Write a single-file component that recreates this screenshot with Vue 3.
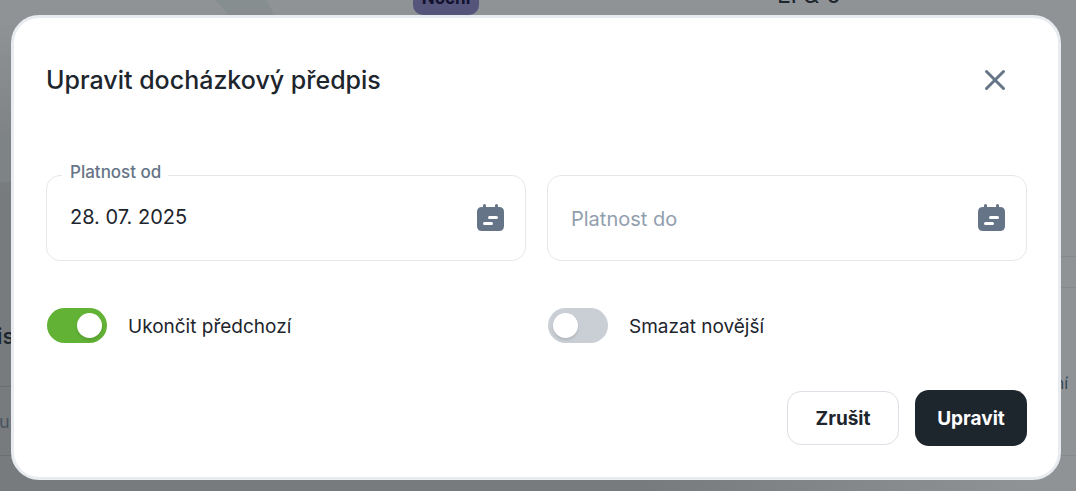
<script setup>
import { ref } from 'vue'

const from = ref('28. 07. 2025')
const to = ref('')
const endPrevious = ref(true)
const deleteNewer = ref(false)
</script>

<template>
  <div class="page">
    <div class="backdrop" aria-hidden="true">
      <svg class="shapes" width="300" height="491" viewBox="0 0 300 491">
        <path d="M215 0 Q225 8 230 20 H275 Q272 8 266 0Z" fill="#878e90" />
        <path d="M0 128 Q4 142 12 150 V180 Q6 184 0 182Z" fill="#7e8385" />
      </svg>
      <span class="line l1"></span>
      <span class="line l2"></span>
      <span class="line l3"></span>
      <span class="line l4"></span>
      <span class="line l5"></span>
      <span class="pill">Noční</span>
      <span class="code">LI &amp; 0</span>
      <span class="cut is">is</span>
      <span class="cut u">u</span>
      <span class="cut ni">ní</span>
    </div>

    <form class="modal" role="dialog" aria-labelledby="title" @submit.prevent>
      <header class="head">
        <h1 id="title">Upravit docházkový předpis</h1>
        <button class="close" type="button" aria-label="Zavřít">
          <svg width="22" height="22" viewBox="0 0 22 22">
            <path d="M2.500 2.500 L19.500 19.500 M19.500 2.500 L2.500 19.500" fill="none" stroke="#667487" stroke-width="3" stroke-linecap="round" />
          </svg>
        </button>
      </header>

      <div class="grid fields">
        <div class="field">
          <label class="floating" for="from">Platnost od</label>
          <input id="from" v-model="from" class="value" type="text" />
          <button class="pick" type="button" aria-label="Vybrat datum od">
            <svg width="27" height="27" viewBox="0 0 27 27">
              <path d="M7.500 0 Q9 0 9 1.500 V3 H18 V1.500 Q18 0 19.500 0 T21 1.500 V3 H22 Q27 3 27 8 V22 Q27 27 22 27 H5 Q0 27 0 22 V8 Q0 3 5 3 H6 V1.500 Q6 0 7.500 0Z" fill="#667487" />
              <path d="M12.500 13.500 H19.500 M7.500 19.500 H14.500" stroke="#fff" stroke-width="3" stroke-linecap="round" />
            </svg>
          </button>
        </div>
        <div class="field">
          <input id="to" v-model="to" type="text" placeholder="Platnost do" aria-label="Platnost do" />
          <button class="pick" type="button" aria-label="Vybrat datum do">
            <svg width="27" height="27" viewBox="0 0 27 27">
              <path d="M7.500 0 Q9 0 9 1.500 V3 H18 V1.500 Q18 0 19.500 0 T21 1.500 V3 H22 Q27 3 27 8 V22 Q27 27 22 27 H5 Q0 27 0 22 V8 Q0 3 5 3 H6 V1.500 Q6 0 7.500 0Z" fill="#667487" />
              <path d="M12.500 13.500 H19.500 M7.500 19.500 H14.500" stroke="#fff" stroke-width="3" stroke-linecap="round" />
            </svg>
          </button>
        </div>
      </div>

      <div class="grid switches">
        <label class="switch"><input v-model="endPrevious" type="checkbox" role="switch" /><span>Ukončit předchozí</span></label>
        <label class="switch"><input v-model="deleteNewer" type="checkbox" role="switch" /><span>Smazat novější</span></label>
      </div>

      <footer class="actions">
        <button class="cancel" type="button">Zrušit</button>
        <button class="save" type="submit">Upravit</button>
      </footer>
    </form>
  </div>
</template>

<style>
body {
  background: #8f9396;
}
</style>

<style scoped>
.page {
  position: relative;
  box-sizing: border-box;
  min-height: 100vh;
  padding: 15px 15px 11px 11px;
  overflow: hidden;
  font-family: Inter, "Liberation Sans", sans-serif;
  color: #1d252d;
}
.page * {
  box-sizing: border-box;
}
.backdrop {
  position: absolute;
  inset: 0;
  background: radial-gradient(ellipse 100% 100% at 0 100%, #777b7e 60%, #8f9396 96%);
}
.shapes {
  position: absolute;
  top: 0;
  left: 0;
}
.line {
  position: absolute;
  height: 1px;
  background: #85898c;
}
.l1 {
  top: 256px;
  right: 0;
  width: 20px;
}
.l2 {
  top: 287px;
  right: 0;
  width: 20px;
}
.l3 {
  top: 386px;
  left: 0;
  width: 20px;
  background: #6b6f72;
}
.l4 {
  top: 455px;
  left: 0;
  width: 20px;
  background: #6b6f72;
}
.l5 {
  top: 455px;
  right: 0;
  width: 20px;
}
.pill {
  position: absolute;
  top: -17px;
  left: 413px;
  width: 66px;
  height: 32px;
  border-radius: 10px;
  background: #55557c;
  color: #12122f;
  font-size: 17px;
  font-weight: 700;
  line-height: 30px;
  text-align: center;
}
.code {
  position: absolute;
  top: -19px;
  left: 777px;
  font-size: 24px;
  line-height: 28px;
}
.cut {
  position: absolute;
  font-size: 18px;
  line-height: 24px;
}
.is {
  top: 324px;
  left: -3px;
  font-size: 22px;
  font-weight: 500;
}
.u {
  top: 410px;
  left: -1px;
  color: #4a5561;
}
.ni {
  top: 371px;
  right: 8px;
  font-size: 16px;
  color: #344556;
}
.modal {
  position: relative;
  padding: 32px 31px 31px 32px;
  border: 3px solid #e8ebef;
  border-radius: 28px;
  background: #fff;
}
.head {
  display: flex;
  align-items: center;
  justify-content: space-between;
  height: 60px;
}
h1 {
  margin: 0;
  font-size: 25px;
  font-weight: 500;
  line-height: 32px;
}
button {
  font: inherit;
  color: inherit;
  padding: 0;
  border: 0;
  background: none;
}
.close,
.pick {
  display: flex;
  align-items: center;
  justify-content: center;
}
.close {
  width: 64px;
  height: 44px;
}
.pick {
  padding-bottom: 2px;
}
.grid {
  display: grid;
  grid-template-columns: 1fr 1fr;
  gap: 21px;
}
.fields {
  margin-top: 65px;
}
.field {
  position: relative;
  display: flex;
  align-items: center;
  height: 86px;
  padding: 0 21px 0 23px;
  border: 1px solid #e5e8eb;
  border-radius: 14px;
}
.field input {
  flex: 1;
  min-width: 0;
  padding: 2px 0 0;
  border: 0;
  outline: 0;
  background: none;
  font: inherit;
  font-size: 20px;
  line-height: 28px;
  color: inherit;
}
.field .value {
  padding: 0 0 2px;
}
.field input::placeholder {
  color: #929eae;
  opacity: 1;
}
.floating {
  position: absolute;
  top: -16px;
  left: 15px;
  padding: 0 7px 0 8px;
  background: #fff;
  font-size: 17px;
  font-weight: 500;
  line-height: 24px;
  color: #667487;
}
.switches {
  margin-top: 47px;
}
.switch {
  display: flex;
  align-items: center;
  gap: 21px;
  padding-left: 1px;
  font-size: 19px;
  line-height: 28px;
}
.switch span {
  padding-top: 2px;
}
.switch input {
  appearance: none;
  display: flex;
  width: 60px;
  height: 35px;
  margin: 0;
  padding: 5px;
  border-radius: 18px;
  background: #cacfd6;
}
.switch input::before {
  content: "";
  width: 25px;
  height: 25px;
  border-radius: 50%;
  background: #fff;
  box-shadow: 0 2px 3px rgb(0 0 0 / 12%);
}
.switch input:checked {
  justify-content: flex-end;
  background: #62b236;
}
.actions {
  display: flex;
  align-items: center;
  justify-content: flex-end;
  gap: 16px;
  margin-top: 47px;
}
.cancel,
.save {
  width: 112px;
  height: 54px;
  border: 1px solid #dcdfe5;
  border-radius: 14px;
  font-size: 19px;
  font-weight: 700;
}
.save {
  height: 56px;
  border: 0;
  background: #1d252d;
  color: #fff;
}
</style>
